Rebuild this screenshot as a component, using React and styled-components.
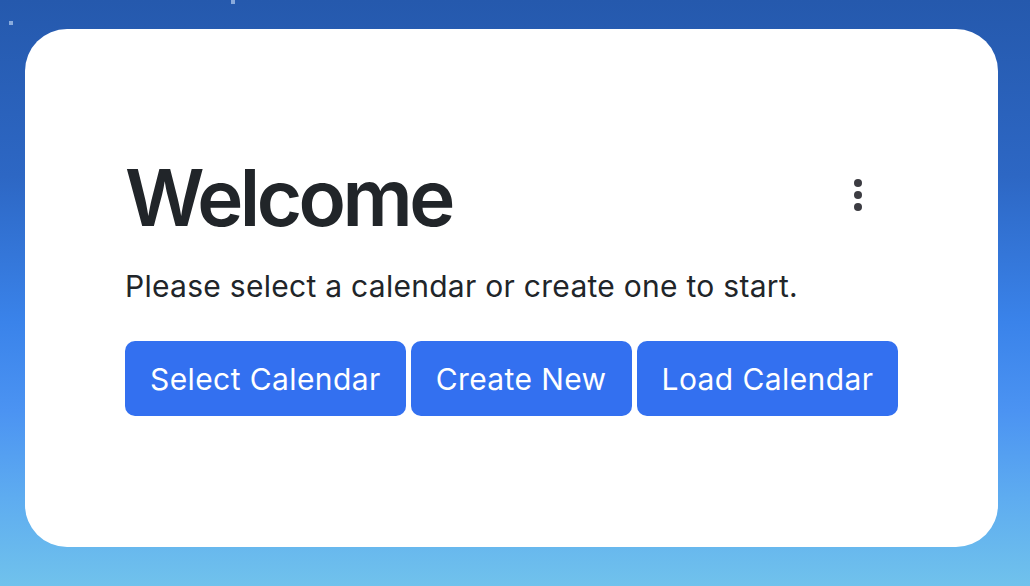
import React from 'react';
import styled, { createGlobalStyle } from 'styled-components';

const GlobalStyle = createGlobalStyle`
  html, body {
    margin: 0;
    padding: 0;
    height: 100%;
  }
  body {
    font-family: Inter, "Noto Sans", "Liberation Sans", sans-serif;
    background: linear-gradient(
      180deg,
      #2559ad 0%,
      #2d67c4 30%,
      #3a83ea 55%,
      #4b93f2 70%,
      #5eacf0 85%,
      #70c2ec 100%
    );
    min-height: 586px;
    overflow: hidden;
  }
`;

const Page = styled.div`
  position: relative;
  height: 586px;
  padding: 29px 32px 0 25px;
  box-sizing: border-box;
`;

const Star = styled.span`
  position: absolute;
  width: ${(p) => p.size}px;
  height: ${(p) => p.size}px;
  background: rgba(180, 205, 240, 0.7);
  left: ${(p) => p.x}px;
  top: ${(p) => p.y}px;
`;

const Card = styled.div`
  background: #fff;
  border-radius: 42px;
  height: 518px;
  box-sizing: border-box;
  padding: 130px 100px 0 100px;
`;

const HeaderRow = styled.div`
  display: flex;
  justify-content: space-between;
  align-items: flex-start;
`;

const Title = styled.h1`
  margin: 0;
  font-size: 78px;
  font-weight: 600;
  line-height: 1;
  color: #212529;
  letter-spacing: -3.5px;
`;

const MenuButton = styled.button`
  border: none;
  background: none;
  padding: 0;
  margin: 16px 28px 0 0;
  width: 24px;
  height: 40px;
  display: flex;
  flex-direction: column;
  align-items: center;
  justify-content: center;
  gap: 4px;
  cursor: pointer;
`;

const Dot = styled.span`
  width: 8px;
  height: 8px;
  border-radius: 50%;
  background: #3c3c42;
`;

const Subtitle = styled.p`
  margin: 31px 0 0 0;
  font-size: 30px;
  line-height: 36px;
  letter-spacing: 0.28px;
  color: #212529;
  white-space: nowrap;
`;

const ButtonRow = styled.div`
  display: flex;
  gap: 5px;
  margin-top: 37px;
`;

const Button = styled.button`
  flex: none;
  height: 75px;
  padding: 0 25px;
  border: none;
  border-radius: 10px;
  background: #3370f0;
  color: #fff;
  font-family: inherit;
  font-size: 30px;
  letter-spacing: 0.4px;
  white-space: nowrap;
  cursor: pointer;
`;

export default function App() {
  return (
    <>
      <GlobalStyle />
      <Page>
        <Star x={9} y={21} size={4} />
        <Star x={231} y={0} size={4} />
        <Card>
          <HeaderRow>
            <Title>Welcome</Title>
            <MenuButton aria-label="More options">
              <Dot />
              <Dot />
              <Dot />
            </MenuButton>
          </HeaderRow>
          <Subtitle>Please select a calendar or create one to start.</Subtitle>
          <ButtonRow>
            <Button>Select Calendar</Button>
            <Button>Create New</Button>
            <Button>Load Calendar</Button>
          </ButtonRow>
        </Card>
      </Page>
    </>
  );
}
